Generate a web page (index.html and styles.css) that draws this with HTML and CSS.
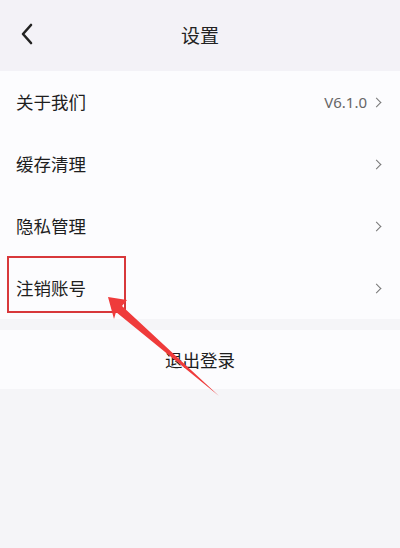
FILE: index.html
```html
<!DOCTYPE html>
<html lang="zh">
<head>
<meta charset="utf-8">
<link rel="stylesheet" href="styles.css">
</head>
<body>
<div class="page">
  <header class="nav">
    <svg class="back" width="14" height="22" viewBox="0 0 14 22"><path d="M11 2 L3 11 L11 20" fill="none" stroke="#222" stroke-width="2.6" stroke-linecap="round" stroke-linejoin="round"/></svg>
    <div class="title">设置</div>
  </header>
  <section class="list">
    <div class="row"><span class="label">关于我们</span><span class="right"><span class="value">V6.1.0</span><span class="chev"></span></span></div>
    <div class="row"><span class="label">缓存清理</span><span class="right"><span class="chev"></span></span></div>
    <div class="row"><span class="label">隐私管理</span><span class="right"><span class="chev"></span></span></div>
    <div class="row"><span class="label">注销账号</span><span class="right"><span class="chev"></span></span></div>
  </section>
  <section class="logout">退出登录</section>
  <div class="mark"></div>
  <svg class="arrow" width="400" height="548" viewBox="0 0 400 548">
    <polygon points="108,297 127,300 122,306 219,396 116,312 114,319" fill="#ef3b3b"/>
  </svg>
</div>
</body>
</html>
```
FILE: styles.css
```css
html, body {
  margin: 0;
  padding: 0;
  background: #f4f4f8;
}
.page {
  position: relative;
  width: 400px;
  height: 548px;
  overflow: hidden;
  background: #f5f5f8;
  font-family: "Noto Sans CJK SC", "Noto Sans", sans-serif;
  color: #1e1e1e;
}
.nav {
  height: 71px;
  background: #f3f2f7;
  display: flex;
  align-items: center;
  justify-content: center;
  position: relative;
}
.back {
  position: absolute;
  left: 20px;
  top: 23px;
}
.title {
  font-size: 19px;
  line-height: 1;
  color: #222;
  margin-top: -2px;
}
.list {
  background: #fcfcfe;
}
.row {
  height: 62px;
  display: flex;
  align-items: center;
  justify-content: space-between;
  padding: 0 18px 0 16px;
}
.label {
  font-size: 17.5px;
  line-height: 1;
  color: #1e1e1e;
}
.right {
  display: flex;
  align-items: center;
  gap: 6px;
}
.value {
  font-family: "Noto Sans", sans-serif;
  font-size: 15px;
  color: #666;
  line-height: 1;
}
.chev {
  width: 6px;
  height: 6px;
  border-right: 1.3px solid #777;
  border-top: 1.3px solid #777;
  transform: rotate(45deg);
  margin-right: 2px;
}
.logout {
  margin-top: 11px;
  height: 59px;
  background: #fcfcfe;
  display: flex;
  align-items: center;
  justify-content: center;
  font-size: 17.5px;
  color: #1e1e1e;
}
.mark {
  position: absolute;
  left: 7px;
  top: 256px;
  width: 115px;
  height: 53px;
  border: 2px solid #d8383b;
}
.arrow {
  position: absolute;
  left: 0;
  top: 0;
}
```
